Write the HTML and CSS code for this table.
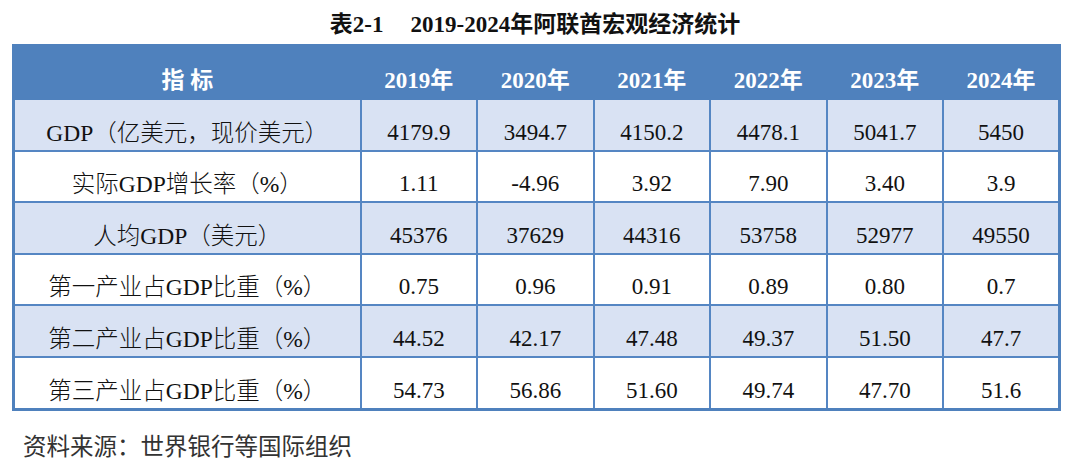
FILE: index.html
```html
<!DOCTYPE html>
<html lang="zh-CN">
<head>
<meta charset="utf-8">
<title>表2-1 2019-2024年阿联酋宏观经济统计</title>
<link rel="stylesheet" href="styles.css">
</head>
<body>
<div class="page">
  <h1 class="caption"><span>表2-1</span><span class="caption-gap">2019-2024年阿联酋宏观经济统计</span></h1>
  <table class="stats">
    <colgroup>
      <col class="col-name">
      <col class="col-year"><col class="col-year"><col class="col-year">
      <col class="col-year"><col class="col-year"><col class="col-year">
    </colgroup>
    <thead>
      <tr class="head">
        <th>指 标</th><th>2019年</th><th>2020年</th><th>2021年</th><th>2022年</th><th>2023年</th><th>2024年</th>
      </tr>
    </thead>
    <tbody>
      <tr class="shade">
        <td>GDP（亿美元，现价美元）</td><td>4179.9</td><td>3494.7</td><td>4150.2</td><td>4478.1</td><td>5041.7</td><td>5450</td>
      </tr>
      <tr>
        <td>实际GDP增长率（%）</td><td>1.11</td><td>-4.96</td><td>3.92</td><td>7.90</td><td>3.40</td><td>3.9</td>
      </tr>
      <tr class="shade">
        <td>人均GDP（美元）</td><td>45376</td><td>37629</td><td>44316</td><td>53758</td><td>52977</td><td>49550</td>
      </tr>
      <tr>
        <td>第一产业占GDP比重（%）</td><td>0.75</td><td>0.96</td><td>0.91</td><td>0.89</td><td>0.80</td><td>0.7</td>
      </tr>
      <tr class="shade">
        <td>第二产业占GDP比重（%）</td><td>44.52</td><td>42.17</td><td>47.48</td><td>49.37</td><td>51.50</td><td>47.7</td>
      </tr>
      <tr>
        <td>第三产业占GDP比重（%）</td><td>54.73</td><td>56.86</td><td>51.60</td><td>49.74</td><td>47.70</td><td>51.6</td>
      </tr>
    </tbody>
  </table>
  <p class="source">资料来源：世界银行等国际组织</p>
</div>
</body>
</html>
```

FILE: styles.css
```css
html, body {
  margin: 0;
  padding: 0;
  background: #ffffff;
}

.page {
  width: 1046px;
  margin-left: 12px;
  font-family: "Liberation Serif", "Noto Sans CJK SC", serif;
  color: #111111;
}

.caption {
  margin: 0;
  height: 44px;
  box-sizing: border-box;
  padding-top: 11px;
  font-size: 23px;
  line-height: 28px;
  font-weight: 700;
  text-align: center;
  color: #111111;
  white-space: nowrap;
}

.caption-gap {
  margin-left: 27px;
}

.stats {
  width: 1046px;
  table-layout: fixed;
  border-collapse: collapse;
  border: 3px solid #4f81bd;
}

.col-name {
  width: 347px;
}

.col-year {
  width: 116.5px;
}

.stats th,
.stats td {
  border: 2px solid #5586c3;
  padding: 0 0 4px 0;
  text-align: center;
  vertical-align: bottom;
  font-size: 23px;
  line-height: 26px;
  white-space: nowrap;
}

.stats td {
  height: 45.6px;
  font-weight: 300;
  color: #111111;
}

.stats td:first-child {
  font-size: 23.5px;
}

.head th {
  height: 47px;
  background: #4f81bd;
  color: #ffffff;
  font-weight: 700;
  border-top: 0;
  border-bottom: 2px solid #4f81bd;
  border-left-color: #4f81bd;
  border-right-color: #4f81bd;
}

.shade td {
  background: #d9e2f3;
}

.source {
  margin: 20px 0 0 11px;
  font-family: "Noto Sans CJK SC", sans-serif;
  font-size: 23.5px;
  line-height: 28px;
  color: #333333;
  font-weight: 400;
}
```
